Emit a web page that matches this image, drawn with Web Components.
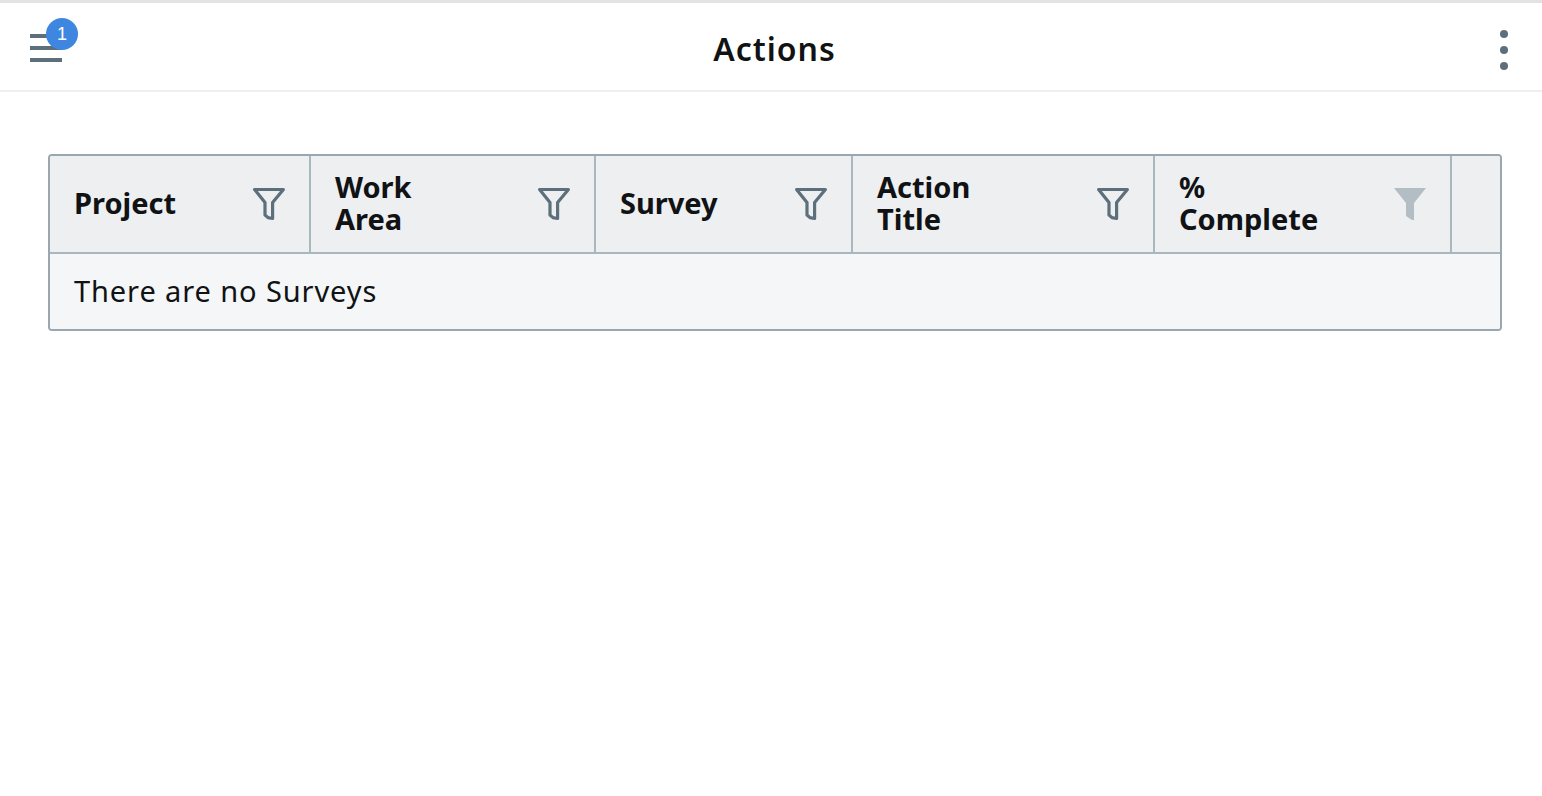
<!DOCTYPE html>
<html><head><meta charset="utf-8">
<style>
html,body{margin:0;padding:0;background:#fff;}
body{font-family:"Noto Sans","Open Sans",sans-serif;color:#101214;height:796px;overflow:hidden;}
</style></head>
<body>
<app-bar>Actions</app-bar>
<data-table>
  <col-head style="--w:261px">Project</col-head>
  <col-head style="--w:285px">Work<br>Area</col-head>
  <col-head style="--w:257px">Survey</col-head>
  <col-head style="--w:302px">Action<br>Title</col-head>
  <col-head style="--w:297px" solid>%<br>Complete</col-head>
  <col-head style="--w:50px" blank></col-head>
  <span slot="empty">There are no Surveys</span>
</data-table>
<script>
function el(name,html,init){
  customElements.define(name,class extends HTMLElement{
    constructor(){super();this.attachShadow({mode:'open'}).innerHTML=html;}
    connectedCallback(){if(init)init(this);}
  });
}
el('app-bar',`<style>
:host{display:grid;grid-template-columns:1fr auto 1fr;align-items:center;box-sizing:border-box;height:92px;border-top:3px solid #e3e3e3;border-bottom:2px solid #efefef;padding:0 30px;background:#fff}
.menu{position:relative;width:32px;height:28px;display:flex;flex-direction:column;justify-content:space-between;margin-top:2px}
.menu i{display:block;height:4px;background:#5c6f7b}
.badge{position:absolute;left:16px;top:-16px;width:32px;height:32px;border-radius:50%;background:#3f86e0;color:#fff;font-size:18px;line-height:32px;text-align:center;font-family:"Liberation Sans",sans-serif}
.title{font-size:32px;font-weight:600;line-height:40px;color:#101214;letter-spacing:1px;margin-top:5px;padding-left:7px}
.more{justify-self:end;width:8px;height:40px;display:flex;flex-direction:column;justify-content:space-between;margin-right:4px;margin-top:7px}
.more i{display:block;width:8px;height:8px;border-radius:50%;background:#5c6f7b}
</style>
<div class="menu"><i></i><i></i><i></i><span class="badge">1</span></div>
<div class="title"><slot></slot></div>
<div class="more"><i></i><i></i><i></i></div>`);

el('data-table',`<style>
:host{display:block;box-sizing:border-box;width:1454px;margin:62px 0 0 48px;border:2px solid #9aa7b0;border-radius:4px;overflow:hidden}
.head{display:flex;height:98px;background:#edeff1;border-bottom:2px solid #a9b7be;box-sizing:border-box}
.empty{height:75px;box-sizing:border-box;background:#f4f6f8;display:flex;align-items:center;padding:0 0 2px 24px;font-size:29px;letter-spacing:.9px;color:#101214}
</style>
<div class="head"><slot></slot></div>
<div class="empty"><slot name="empty"></slot></div>`);

const outline='<path d="M2.6 2.5H31.4L20.6 15.5V31.5L16 30.6 13 28V15.5Z" fill="none" stroke="#5c6f7b" stroke-width="3.2" stroke-linejoin="round"/>';
const solid='<path d="M1 1H33L21 16V33H19L13 29V16Z" fill="#b2bdc4" stroke="none"/>';
el('col-head',`<style>
:host{display:flex;align-items:center;justify-content:space-between;box-sizing:border-box;width:var(--w);flex:none;height:100%;padding:0 23px 0 24px;border-right:2px solid #a9b7be;font-size:29px;font-weight:700;line-height:32px;color:#101214}
:host([blank]){border-right:0;padding:0}
:host([blank]) svg{display:none}
.label{margin-top:-2px}
svg{width:34px;height:34px;flex:none;overflow:visible}
</style><div class="label"><slot></slot></div><svg viewBox="0 0 34 34"></svg>`,e=>{
  e.shadowRoot.querySelector('svg').innerHTML=e.hasAttribute('solid')?solid:outline;
});
</script>
</body></html>
